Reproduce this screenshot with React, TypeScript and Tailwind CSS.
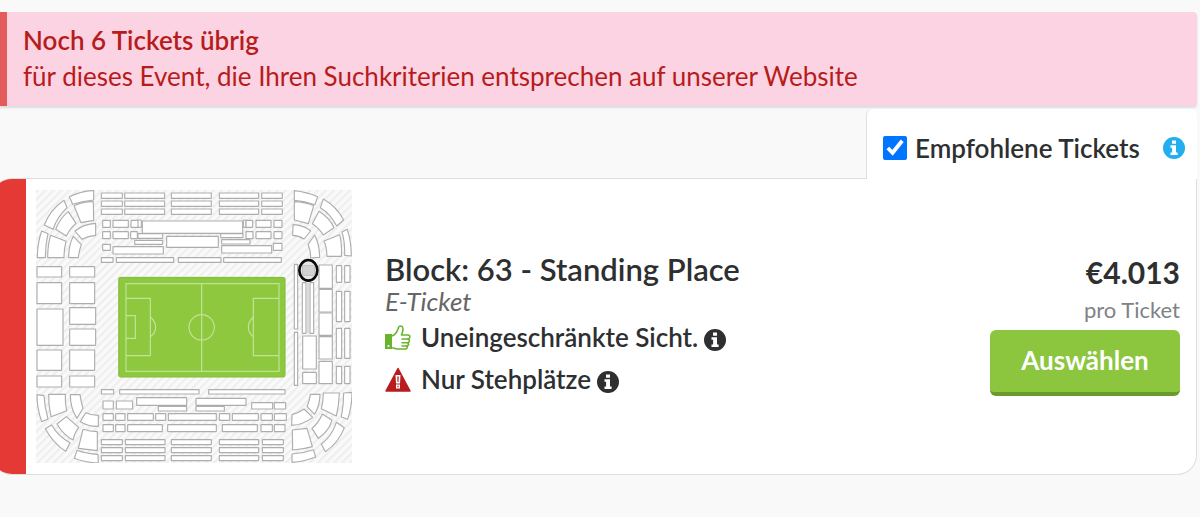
import { useState } from "react"

type Box = [x: number, y: number, w: number, h: number]

// Seat rows and blocks on the straight sides of the stadium
const rowColumnsTop = [[304, 63], [374, 120], [514, 120], [658, 118], [785, 62]]
const rowColumnsBottom = [[304, 63], [376, 119], [514, 120], [658, 118], [787, 63]]

const blocks: Box[] = [
  ...[69, 93, 117].flatMap((y) => rowColumnsTop.map(([x, w]): Box => [x, y, w, 16])),
  ...[809, 833, 857].flatMap((y) => rowColumnsBottom.map(([x, w]): Box => [x, y, w, 15])),
  // north stand
  [308, 151, 23, 21], [339, 151, 46, 21], [393, 151, 24, 21], [414, 150, 10, 22],
  [427, 153, 301, 37], [730, 150, 8, 22], [738, 151, 20, 21], [768, 151, 45, 21], [822, 151, 24, 21],
  [308, 185, 23, 21], [339, 185, 46, 21], [392, 185, 20, 21], [414, 191, 74, 14],
  [662, 191, 67, 12], [738, 185, 21, 21], [768, 185, 45, 21], [822, 185, 24, 21],
  [404, 211, 84, 12], [665, 209, 85, 13], [500, 199, 155, 33],
  [308, 223, 23, 18], [339, 230, 151, 22], [665, 227, 150, 22], [820, 220, 26, 21],
  [304, 263, 35, 14], [349, 263, 172, 14], [535, 263, 128, 14], [671, 263, 173, 14],
  // west stand
  [111, 290, 74, 31], [209, 290, 75, 31], [111, 338, 74, 63], [209, 338, 75, 63],
  [111, 417, 78, 109], [209, 413, 78, 50], [209, 477, 78, 49],
  [111, 540, 74, 61], [209, 540, 75, 61], [111, 618, 74, 33], [209, 618, 75, 33],
  // south stand
  [304, 659, 37, 13], [359, 659, 238, 13], [626, 659, 229, 13],
  [309, 693, 31, 24], [349, 693, 49, 24], [410, 683, 150, 23], [475, 709, 85, 14],
  [588, 685, 150, 21], [588, 709, 85, 14], [755, 698, 63, 19], [823, 698, 34, 19],
  [309, 731, 31, 20], [347, 731, 28, 20], [383, 731, 77, 20], [467, 731, 30, 20], [505, 731, 144, 20],
  [658, 731, 31, 20], [697, 731, 78, 20], [783, 731, 34, 20], [823, 731, 36, 20],
  [309, 764, 31, 21], [347, 764, 28, 21], [383, 764, 104, 21], [503, 764, 146, 21],
  [667, 764, 105, 21], [783, 764, 34, 21], [823, 764, 32, 21],
  // east stand
  [883, 283, 10, 194], [883, 487, 10, 159], [907, 338, 11, 152], [930, 338, 11, 152],
  [908, 498, 41, 99], [908, 607, 41, 34],
  [957, 285, 40, 70], [957, 358, 40, 68], [957, 429, 40, 67], [957, 500, 40, 67], [957, 574, 40, 67],
  [1009, 287, 16, 50], [1034, 287, 16, 50], [1009, 364, 16, 91], [1034, 364, 16, 91],
  [1009, 475, 16, 90], [1034, 475, 16, 90], [1009, 589, 16, 52], [1034, 589, 16, 52],
]

const corners = [
  {
    shift: "translate(0 0)",
    paths: [
      "M208 80Q240 64 281 61V90Q250 92 218 103Z",
      "M222 107Q250 94 280 95L281 151L243 158Z",
      "M192 91L201 113Q172 140 159 178L133 165Q150 120 192 91Z",
      "M205 125L228 160Q210 175 199 198L167 178Q180 145 205 125Z",
      "M225 183Q250 162 287 160V196Q265 198 246 208Z",
      "M125 183L144 191Q136 225 136 263H112Q112 220 125 183Z",
      "M152 196L198 214Q192 238 192 263H143Q143 225 152 196Z",
      "M220 199L244 224Q237 243 235 263H206Q206 225 220 199Z",
    ],
  },
  {
    shift: "translate(570 0)",
    paths: [
      "M313 62Q350 66 383 80L375 104Q345 93 313 91Z",
      "M313 95Q345 96 371 107L355 161L313 150Z",
      "M400 87Q440 110 461 150L440 168Q420 130 391 113Z",
      "M387 124Q420 145 432 173L400 195Q388 175 367 161Z",
      "M309 164Q340 165 362 183L342 207Q325 196 308 196Z",
      "M374 195Q389 225 389 262L362 264Q362 240 354 223Z",
      "M402 213L449 194Q457 225 454 259H411Q410 230 402 213Z",
      "M456 186L472 178Q484 215 484 258L464 256Q465 215 456 186Z",
    ],
  },
  {
    shift: "translate(0 450)",
    paths: [
      "M111 224L132 227Q134 262 144 297L125 305Q111 265 111 224Z",
      "M146 223H196Q195 250 200 272L153 290Q145 255 146 223Z",
      "M211 224H240Q243 245 249 265L231 295Q211 265 211 224Z",
      "M257 278Q275 286 295 286V319Q265 320 241 305Z",
      "M199 290L236 322Q225 335 219 360Q190 345 171 312Z",
      "M155 315Q175 350 210 368L197 394Q160 370 136 326Z",
      "M249 328Q270 335 292 335V392L235 385Z",
      "M231 391Q260 402 294 403L295 429Q255 428 223 415Z",
    ],
  },
  {
    shift: "translate(570 450)",
    paths: [
      "M361 223H390Q390 255 374 283L351 260Q358 245 361 223Z",
      "M400 219H448Q447 255 439 288L394 266Q400 245 400 219Z",
      "M461 219L486 217Q486 260 473 298L454 291Q461 255 461 219Z",
      "M306 284Q325 279 342 267L368 292Q340 314 305 316Z",
      "M397 282L426 301Q415 335 385 355L366 325Q385 310 397 282Z",
      "M439 307L463 323Q445 370 406 395L394 372Q425 350 439 307Z",
      "M307 330L351 325L367 380Q340 388 308 390Z",
      "M306 402Q340 400 370 389L377 411Q340 425 306 427Z",
    ],
  },
]

function StadiumMap() {
  return (
    <svg viewBox="108 60 948 819" className="w-[316px] shrink-0" role="img" aria-label="Stadionplan">
      <defs>
        <pattern id="hatch" width="17" height="17" patternUnits="userSpaceOnUse" patternTransform="rotate(45)">
          <rect width="17" height="17" fill="#fafafa" />
          <rect width="7" height="17" fill="#efefef" />
        </pattern>
      </defs>
      <rect x="108" y="60" width="948" height="819" fill="url(#hatch)" />
      <g fill="#fff" stroke="#adadad" strokeWidth="3.4" strokeLinejoin="round">
        {blocks.map(([x, y, w, h]) => (
          <rect key={`${x}-${y}`} x={x} y={y} width={w} height={h} rx="1" />
        ))}
        {corners.map((corner) => (
          <g key={corner.shift} transform={corner.shift}>
            {corner.paths.map((d) => (
              <path key={d} d={d} />
            ))}
          </g>
        ))}
      </g>
      <rect x="920" y="338" width="8" height="152" fill="#dcdcdc" />

      {/* pitch */}
      <rect x="355" y="321" width="501" height="301" rx="7" fill="#8dc83f" />
      <rect x="356" y="322" width="499" height="299" rx="6" fill="none" stroke="#7fb838" strokeWidth="2" />
      <g fill="none" stroke="#c3e39a" strokeWidth="3.5">
        <rect x="378" y="341" width="459" height="263" />
        <path d="M605 341V604" />
        <circle cx="605" cy="472" r="38" />
        <path d="M378 385H451V557H378M378 437H406V505H378" />
        <path d="M451 441Q467 455 467 472T451 500" />
        <path d="M837 385H760V557H837" />
        <path d="M760 441Q745 455 745 472T760 500" />
      </g>

      {/* selected block */}
      <ellipse cx="925" cy="301" rx="27" ry="31" fill="#e6e6e6" stroke="#0a0a0a" strokeWidth="8" />
      <rect x="907" y="287" width="36" height="29" fill="#d2d2d2" stroke="#b5b5b5" strokeWidth="2" />
    </svg>
  )
}

function InfoIcon({ className }: { className: string }) {
  return (
    <svg viewBox="0 0 22 22" className={`size-[22px] shrink-0 ${className}`} aria-hidden="true">
      <circle cx="11" cy="11" r="11" fill="currentColor" />
      <path d="M9 3.5H13V6.800H9ZM7.500 8.300H13V15.500H14.600V18H7.500V15.500H9.100V10.800H7.500Z" fill="#fff" />
    </svg>
  )
}

function ThumbsUpIcon() {
  return (
    <svg viewBox="0 0 26 26" className="size-[26px] shrink-0" aria-hidden="true">
      <path d="M0 9H7V24H0Z" fill="#6ab42d" />
      <circle cx="3.5" cy="21" r="1.1" fill="#fff" />
      <g fill="none" stroke="#6ab42d" strokeWidth="1.6" strokeLinejoin="round" strokeLinecap="round">
        <path d="M7 11C10 10 12 7 13 4C13.4 2 14 1 15.5 1C18 1 18.5 4 17.5 7L16.5 10H23C25.5 10 25.5 13.5 23 14C25.2 14.5 24.8 17.5 22.5 17.7C24.3 18.3 23.8 20.8 21.700 21C23 22 22 24 20 24H13C10.5 24 9.5 22.800 7 22.800" />
        <path d="M17 14H23M17 17.7H22.5M17 21H21.7" />
      </g>
    </svg>
  )
}

function WarningIcon() {
  return (
    <svg viewBox="0 0 26 26" className="size-[26px] shrink-0" aria-hidden="true">
      <path d="M13 1.5L25 24H1Z" fill="#b91c1c" stroke="#b91c1c" strokeWidth="1.5" strokeLinejoin="round" />
      <path d="M10.5 8H15.500L15 16.5H11ZM11 17.5H15V21.5H11Z" fill="#fff" />
      <path d="M12.300 9.5H13.700L13.500 15H12.500ZM12.400 18.800H13.600V20.200H12.400Z" fill="#b91c1c" />
    </svg>
  )
}

export default function App() {
  const [recommended, setRecommended] = useState(true)

  return (
    <div className="min-h-screen overflow-hidden bg-[#f9f9f9] pt-3 pr-[3px] font-[Lato,sans-serif] text-[#2d2f31]">
      <div className="rounded-r border-l-[7px] border-[#e45b5b] bg-[#fcd3e2] px-4 pt-[10px] pb-3 text-[26px] text-[#b71c1c] shadow-[0_2px_2px_#dcdedd]">
        <p className="leading-9 font-semibold">Noch 6 Tickets übrig</p>
        <p className="leading-9">
          für dieses Event, die Ihren Suchkriterien entsprechen auf unserer Website
        </p>
      </div>

      <div className="relative z-10 mt-[3px] -mb-px flex justify-end">
        <div className="flex h-[70px] w-[331px] items-center rounded-t-md border-l border-[#dedede] bg-white pt-2 pr-3 pl-4">
          <input
            id="recommended"
            type="checkbox"
            checked={recommended}
            onChange={(e) => setRecommended(e.target.checked)}
            className="size-6"
          />
          <label htmlFor="recommended" className="ml-2 text-[26px] leading-8 font-semibold">
            Empfohlene Tickets
          </label>
          <InfoIcon className="ml-auto text-[#22aeef]" />
        </div>
      </div>

      <div className="-ml-2 flex overflow-hidden rounded-l-[20px] rounded-br-[20px] border-y border-r border-[#dedede] bg-white">
        <div className="w-[34px] shrink-0 bg-[#e53935]" />
        <div className="flex flex-1 items-center py-[11px] pr-4 pl-[10px]">
          <StadiumMap />
          <div className="ml-[33px] flex-1">
            <h2 className="text-[31px] leading-8 font-semibold">Block: 63 - Standing Place</h2>
            <p className="text-[26px] leading-8 text-[#666] italic">E-Ticket</p>
            <ul>
              <li className="flex h-[42px] items-center text-[26px] font-semibold">
                <ThumbsUpIcon />
                <span className="ml-[10px]">Uneingeschränkte Sicht.</span>
                <InfoIcon className="mt-1 ml-[6px]" />
              </li>
              <li className="flex h-[42px] items-center text-[26px] font-semibold">
                <WarningIcon />
                <span className="ml-[10px]">Nur Stehplätze</span>
                <InfoIcon className="mt-1 ml-[6px]" />
              </li>
            </ul>
          </div>
          <div className="flex flex-col items-end">
            <p className="text-[30px] leading-9 font-bold">€4.013</p>
            <p className="text-[22px] leading-10 text-[#808285]">pro Ticket</p>
            <button
              type="button"
              className="mb-1 h-[66px] w-[190px] rounded-md border-b-4 border-[#6a9a2b] bg-[#8cc63f] text-[26px] font-bold text-white hover:bg-[#82ba38]"
            >
              Auswählen
            </button>
          </div>
        </div>
      </div>
    </div>
  )
}
